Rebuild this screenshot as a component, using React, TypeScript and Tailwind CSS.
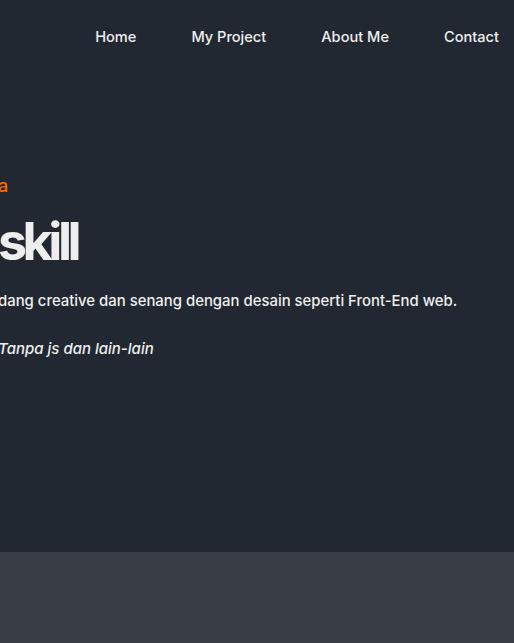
import React from 'react'

const navItems = ['Home', 'My Project', 'About Me', 'Contact']

function Navbar() {
  return (
    <nav className="flex h-[72px] items-center justify-end pr-[15px]">
      <ul className="flex items-center gap-[55px]">
        {navItems.map((item) => (
          <li key={item}>
            <a href="#" className="text-[14.6px] font-medium text-[#eeeeee]">
              {item}
            </a>
          </li>
        ))}
      </ul>
    </nav>
  )
}

function Hero() {
  return (
    <section className="h-[480px] overflow-hidden pt-[102px]">
      <div className="-ml-[2px] flex flex-col">
        <p className="text-[18px] font-medium leading-6 text-[#f96d00]">a</p>
        <h1 className="mt-[14px] text-[52px] font-bold leading-[60px] tracking-[-4.5px] text-[#eeeeee]">skill</h1>
        <p className="mt-[17px] text-[14.9px] font-medium leading-6 text-[#eeeeee]">
          dang creative dan senang dengan desain seperti Front-End web.
        </p>
        <p className="mt-[24px] text-[15px] font-medium italic leading-6 text-[#eeeeee]">Tanpa js dan lain-lain</p>
      </div>
    </section>
  )
}

export default function App() {
  return (
    <div className="min-h-[643px] bg-[#393e46] font-['Inter',sans-serif]">
      <div className="bg-[#222831]">
        <Navbar />
        <Hero />
      </div>
    </div>
  )
}
